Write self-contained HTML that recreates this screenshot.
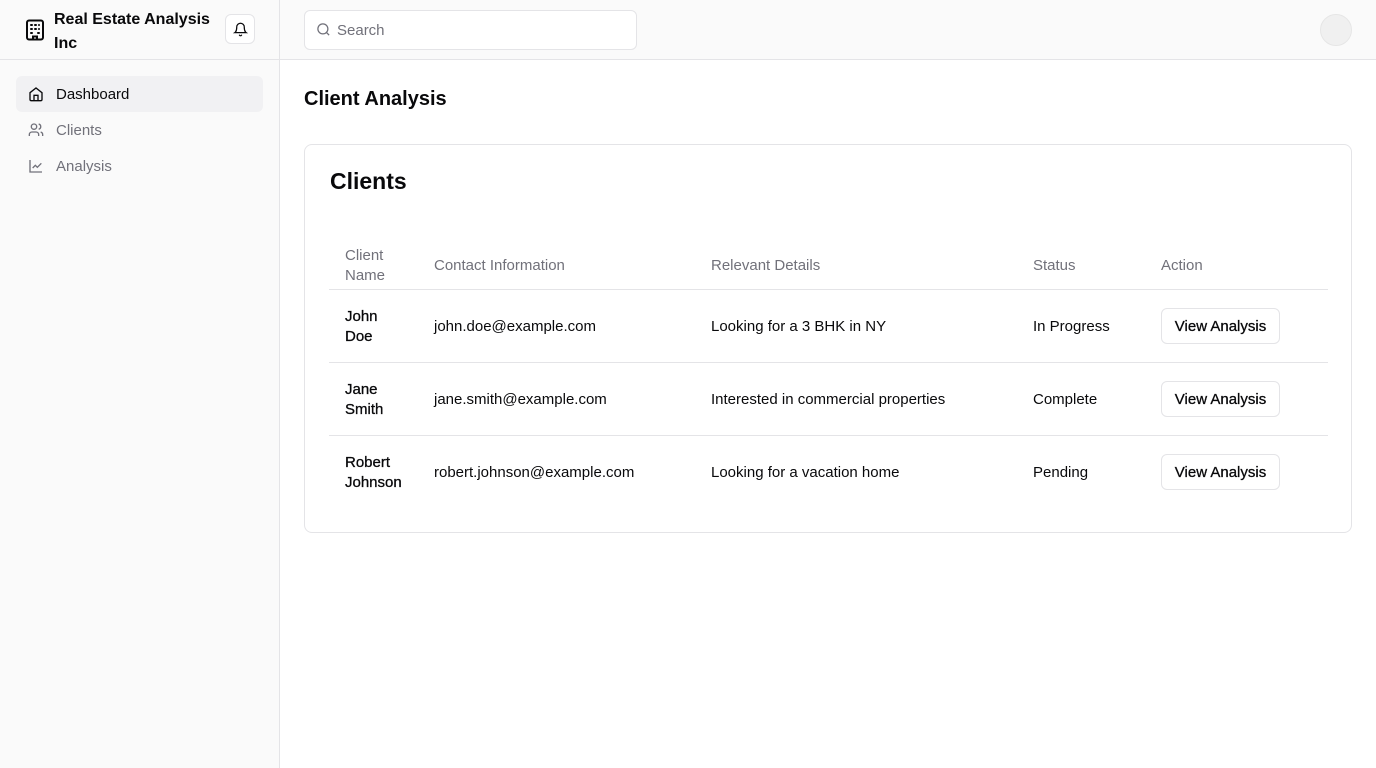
<!DOCTYPE html>
<html><head><style>
*{box-sizing:border-box;margin:0;padding:0}
body{width:1376px;height:768px;font-family:"Liberation Sans",sans-serif;color:#09090b;background:#fff;position:relative;overflow:hidden}
.side{position:absolute;left:0;top:0;width:280px;height:768px;background:#fafafa;border-right:1px solid #e4e4e7}
.brand{height:60px;border-bottom:1px solid #e4e4e7;position:relative}
.brand .t{position:absolute;left:54px;top:7px;font-weight:700;font-size:16px;line-height:24px;width:170px}
.bell{position:absolute;left:225px;top:14px;width:30px;height:30px;border:1px solid #e4e4e7;border-radius:6px;background:#fff}
.nav{position:absolute;left:16px;width:247px;height:36px;border-radius:6px;font-size:15px;line-height:38px;padding-left:40px;color:#71717a}
.nav svg{position:absolute;left:12px;top:10px}
.top{position:absolute;left:280px;top:0;width:1096px;height:60px;background:#fafafa;border-bottom:1px solid #e4e4e7}
.search{position:absolute;left:24px;top:10px;width:333px;height:40px;border:1px solid #e4e4e7;border-radius:6px;background:#fff;font-size:15px;color:#71717a;line-height:40px;padding-left:32px}
.search svg{position:absolute;left:11px;top:11px}
.av{position:absolute;left:1040px;top:14px;width:32px;height:32px;border-radius:50%;background:#f0f0f0;border:1px solid #e6e6e6}
h1{position:absolute;left:304px;top:88px;font-size:20px;font-weight:700}
.card{position:absolute;left:304px;top:144px;width:1048px;height:389px;border:1px solid #e4e4e7;border-radius:8px}
.card h2{position:absolute;left:25px;top:23px;font-size:23px;font-weight:700}
.cell{position:absolute;font-size:15px;line-height:20px}
.hd{color:#71717a}
.line{position:absolute;left:24px;width:999px;height:1px;background:#e4e4e7}
.btn{position:absolute;left:856px;width:119px;height:36px;border:1px solid #e4e4e7;border-radius:6px;font-size:15px;line-height:36px;text-align:center;background:#fff;-webkit-text-stroke:0.3px #09090b}
.nm{-webkit-text-stroke:0.3px #09090b}
</style></head><body>
<div class="side">
 <div class="brand">
  <svg style="position:absolute;left:25px;top:19px" width="20" height="22" viewBox="0 0 20 22" fill="none" stroke="#09090b" stroke-width="2"><rect x="2" y="1.5" width="16" height="19" rx="2"/><path d="M6 6h1M10 6h1M14 6h0M6 10h1M10 10h1M14 10h0M6 14h1M13 14h1M8 20.5v-3h4v3" stroke-linecap="round"/></svg>
  <div class="t" style="top:8px">Real Estate Analysis Inc</div>
  <div class="bell"><svg style="position:absolute;left:7px;top:7px" width="15" height="15" viewBox="0 0 24 24" fill="none" stroke="#09090b" stroke-width="2" stroke-linecap="round"><path d="M6 8a6 6 0 0 1 12 0c0 7 3 9 3 9H3s3-2 3-9M10.3 21a1.9 1.9 0 0 0 3.4 0"/></svg></div>
 </div>
 <div class="nav" style="top:76px;background:#f1f1f3;color:#09090b">
  <svg width="16" height="16" viewBox="0 0 24 24" fill="none" stroke="#09090b" stroke-width="2"><path d="M3 10l9-7 9 7v10a2 2 0 0 1-2 2H5a2 2 0 0 1-2-2z"/><path d="M9 22v-8h6v8"/></svg>Dashboard</div>
 <div class="nav" style="top:112px">
  <svg width="16" height="16" viewBox="0 0 24 24" fill="none" stroke="#71717a" stroke-width="2"><circle cx="9" cy="7" r="4"/><path d="M2 21v-2a4 4 0 0 1 4-4h6a4 4 0 0 1 4 4v2M16 3.1a4 4 0 0 1 0 7.8M22 21v-2a4 4 0 0 0-3-3.9"/></svg>Clients</div>
 <div class="nav" style="top:148px">
  <svg width="16" height="16" viewBox="0 0 24 24" fill="none" stroke="#71717a" stroke-width="2"><path d="M3 3v18h18M7 15l4-4 3 3 6-6"/></svg>Analysis</div>
</div>
<div class="top">
 <div class="search"><svg width="15" height="15" viewBox="0 0 24 24" fill="none" stroke="#71717a" stroke-width="2"><circle cx="11" cy="11" r="8"/><path d="M21 21l-4.3-4.3"/></svg>Search</div>
 <div class="av"></div>
</div>
<h1>Client Analysis</h1>
<div class="card">
 <h2>Clients</h2>
 <div class="cell hd" style="left:40px;top:101px">Client<br>Name</div>
 <div class="cell hd" style="left:129px;top:111px">Contact Information</div>
 <div class="cell hd" style="left:406px;top:111px">Relevant Details</div>
 <div class="cell hd" style="left:728px;top:111px">Status</div>
 <div class="cell hd" style="left:856px;top:111px">Action</div>
 <div class="line" style="top:144px"></div>
 <div class="cell nm" style="left:40px;top:162px">John<br>Doe</div>
 <div class="cell" style="left:129px;top:172px">john.doe@example.com</div>
 <div class="cell" style="left:406px;top:172px">Looking for a 3 BHK in NY</div>
 <div class="cell" style="left:728px;top:172px">In Progress</div>
 <div class="btn" style="top:163px">View Analysis</div>
 <div class="line" style="top:217px"></div>
 <div class="cell nm" style="left:40px;top:235px">Jane<br>Smith</div>
 <div class="cell" style="left:129px;top:245px">jane.smith@example.com</div>
 <div class="cell" style="left:406px;top:245px">Interested in commercial properties</div>
 <div class="cell" style="left:728px;top:245px">Complete</div>
 <div class="btn" style="top:236px">View Analysis</div>
 <div class="line" style="top:290px"></div>
 <div class="cell nm" style="left:40px;top:308px">Robert<br>Johnson</div>
 <div class="cell" style="left:129px;top:318px">robert.johnson@example.com</div>
 <div class="cell" style="left:406px;top:318px">Looking for a vacation home</div>
 <div class="cell" style="left:728px;top:318px">Pending</div>
 <div class="btn" style="top:309px">View Analysis</div>
</div>
</body></html>
